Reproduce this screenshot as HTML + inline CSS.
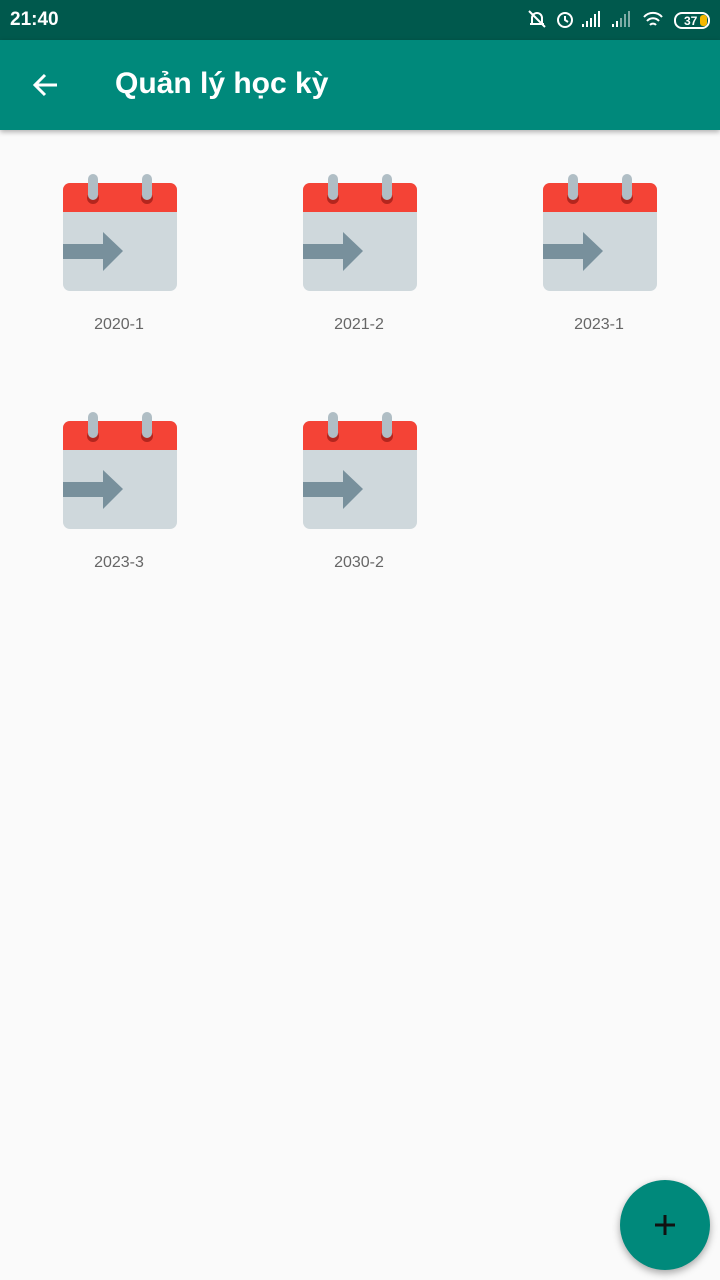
<!DOCTYPE html>
<html><head><meta charset="utf-8"><style>
*{margin:0;padding:0;box-sizing:border-box}
body{width:720px;height:1280px;background:#fafafa;font-family:"Liberation Sans",Roboto,sans-serif;position:relative;overflow:hidden}
.sb{position:absolute;top:0;left:0;width:720px;height:40px;background:#00594d;color:#fff}
.sb .t{position:absolute;left:10px;top:9px;font-size:19px;font-weight:bold}
.ab{position:absolute;top:40px;left:0;width:720px;height:90px;background:#00897b;box-shadow:0 2px 5px rgba(0,0,0,.3)}
.ab .ti{position:absolute;left:115px;top:27px;font-size:30px;color:#fff;font-weight:bold}
.it{position:absolute;width:114px}
.it svg{display:block}
.lb{position:absolute;width:200px;text-align:center;font-size:16px;color:#666}
.fab{position:absolute;left:620px;top:1180px;width:90px;height:90px;border-radius:50%;background:#00897b;box-shadow:0 3px 8px rgba(0,0,0,.35)}
</style></head><body>
<div class="sb"><span class="t">21:40</span>
<svg width="200" height="40" style="position:absolute;left:520px;top:0" fill="none" stroke="#fff" stroke-width="2">
<path d="M10 24 h14 M12 24 v-6 a5 5 0 0 1 10 0 v6 M9 11 l16 16"/>
<circle cx="45" cy="20" r="7"/><path d="M45 16v4l3 2"/>
<g fill="#fff" stroke="none"><rect x="62" y="24" width="2" height="3"/><rect x="66" y="21" width="2" height="6"/><rect x="70" y="18" width="2" height="9"/><rect x="74" y="14" width="2" height="13"/><rect x="78" y="11" width="2" height="16"/>
<rect x="92" y="24" width="2" height="3"/><rect x="96" y="21" width="2" height="6"/><rect x="100" y="18" width="2" height="9" opacity=".5"/><rect x="104" y="14" width="2" height="13" opacity=".5"/><rect x="108" y="11" width="2" height="16" opacity=".5"/></g>
<path d="M124 17a12 12 0 0 1 18 0M127 21a8 8 0 0 1 12 0M130 25a4 4 0 0 1 6 0"/>
<rect x="155" y="13" width="34" height="15" rx="7"/><rect x="180" y="15" width="7" height="11" fill="#f5b800" stroke="none" rx="3"/>
<text x="164" y="25" fill="#fff" stroke="none" font-size="12" font-weight="bold" font-family="Liberation Sans">37</text>
</svg></div>
<div class="ab">
<svg width="30" height="30" style="position:absolute;left:31px;top:30px" fill="none" stroke="#fff" stroke-width="3"><path d="M26 15H5M14 5L4 15l10 10"/></svg>
<div class="ti">Quản lý học kỳ</div></div>

<svg width="0" height="0" style="position:absolute"><defs><g id="cal">
<rect x="0" y="9" width="114" height="108" rx="7" fill="#cfd8dc"/>
<path d="M0 38V16a7 7 0 0 1 7-7h100a7 7 0 0 1 7 7v22z" fill="#f44336"/>
<circle cx="30" cy="24" r="6" fill="#b3261e"/><circle cx="84" cy="24" r="6" fill="#b3261e"/>
<rect x="25" y="0" width="10" height="26" rx="5" fill="#b0bec5"/><rect x="79" y="0" width="10" height="26" rx="5" fill="#b0bec5"/>
<path d="M0 70h40v-12l20 19-20 20v-12H0z" fill="#78909c"/>
</g></defs></svg>

<div class="it" style="left:63px;top:174px"><svg width="114" height="118"><use href="#cal"/></svg></div>
<div class="it" style="left:303px;top:174px"><svg width="114" height="118"><use href="#cal"/></svg></div>
<div class="it" style="left:543px;top:174px"><svg width="114" height="118"><use href="#cal"/></svg></div>
<div class="it" style="left:63px;top:412px"><svg width="114" height="118"><use href="#cal"/></svg></div>
<div class="it" style="left:303px;top:412px"><svg width="114" height="118"><use href="#cal"/></svg></div>
<div class="lb" style="left:19px;top:316px">2020-1</div>
<div class="lb" style="left:259px;top:316px">2021-2</div>
<div class="lb" style="left:499px;top:316px">2023-1</div>
<div class="lb" style="left:19px;top:554px">2023-3</div>
<div class="lb" style="left:259px;top:554px">2030-2</div>

<div class="fab"><svg width="90" height="90" stroke="#111" stroke-width="3"><path d="M45 35v20M35 45h20"/></svg></div>
</body></html>
